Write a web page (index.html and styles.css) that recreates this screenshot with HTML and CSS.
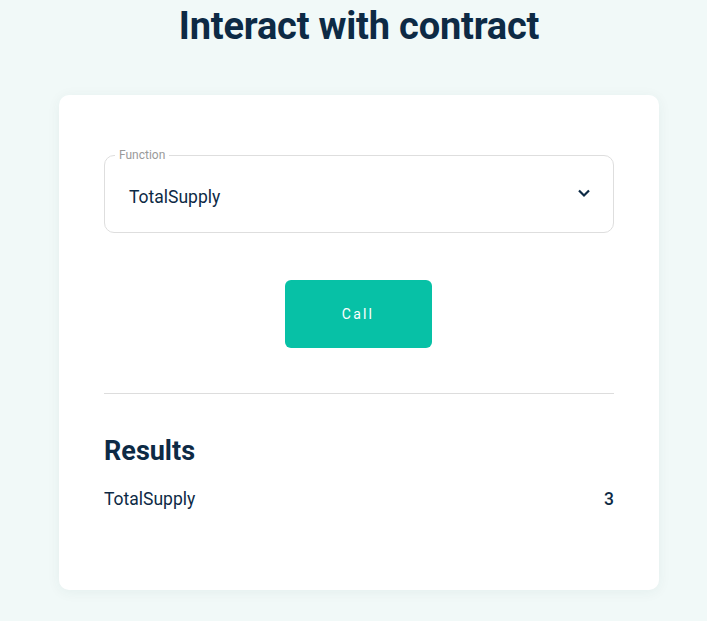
FILE: index.html
```html
<!DOCTYPE html>
<html lang="en">
<head>
<meta charset="utf-8">
<title>Interact with contract</title>
<link rel="stylesheet" href="styles.css">
</head>
<body>
<main class="page">
  <h1 class="title">Interact with contract</h1>
  <section class="card">
    <fieldset class="select">
      <legend class="select-label">Function</legend>
      <span class="select-value">TotalSupply</span>
      <svg class="chevron" width="14" height="10" viewBox="0 0 14 10" aria-hidden="true">
        <path d="M2 2.5 L7 7.5 L12 2.5" fill="none" stroke="#0d2a45" stroke-width="2.2"/>
      </svg>
    </fieldset>
    <div class="actions">
      <button class="call-btn" type="button">Call</button>
    </div>
    <hr class="divider">
    <h2 class="results-title">Results</h2>
    <div class="result-row">
      <span class="result-name">TotalSupply</span>
      <span class="result-value">3</span>
    </div>
  </section>
</main>
</body>
</html>
```

FILE: styles.css
```css
html, body {
  margin: 0;
  padding: 0;
  background: #f1f9f8;
  font-family: Roboto, "Noto Sans", Arial, sans-serif;
  color: #0d2a45;
}

.page {
  display: flex;
  flex-direction: column;
  align-items: center;
  padding: 0 0 31px 11px;
}

.title {
  margin: 3px 0 0;
  font-size: 38px;
  font-weight: 700;
  line-height: 46px;
  color: #0d2a45;
  letter-spacing: -0.2px;
}

.card {
  box-sizing: border-box;
  width: 600px;
  margin-top: 46px;
  background: #ffffff;
  border-radius: 10px;
  box-shadow: 0 2px 14px rgba(20, 60, 60, 0.06);
  padding: 53px 45px 80px;
}

.select {
  margin: 0;
  height: 85px;
  box-sizing: border-box;
  border: 1px solid #dedede;
  border-radius: 10px;
  padding: 0 22px 0 24px;
  display: flex;
  align-items: center;
  justify-content: space-between;
  min-width: 0;
}

.select-label {
  font-size: 12px;
  color: #9a9a9a;
  padding: 0 4px;
  margin-left: -14px;
  line-height: 14px;
}

.select-value {
  font-size: 17.5px;
  color: #0d2a45;
}

.chevron {
  display: block;
  margin-top: -8px;
}

.actions {
  display: flex;
  justify-content: center;
  margin-top: 47px;
}

.call-btn {
  width: 147px;
  height: 68px;
  margin-right: 2px;
  border: none;
  border-radius: 6px;
  background: #07c1a6;
  color: #ffffff;
  font-family: Roboto, Arial, sans-serif;
  font-size: 14px;
  letter-spacing: 2.2px;
  font-weight: 400;
  cursor: pointer;
}

.divider {
  margin: 45px 0 0;
  border: none;
  border-top: 1px solid #dddddd;
}

.results-title {
  margin: 41px 0 0;
  font-size: 27px;
  font-weight: 700;
  line-height: 32px;
  color: #0d2a45;
}

.result-row {
  display: flex;
  justify-content: space-between;
  align-items: center;
  margin-top: 21px;
  font-size: 17.5px;
  line-height: 22px;
}

.result-value {
  font-weight: 500;
}
```
